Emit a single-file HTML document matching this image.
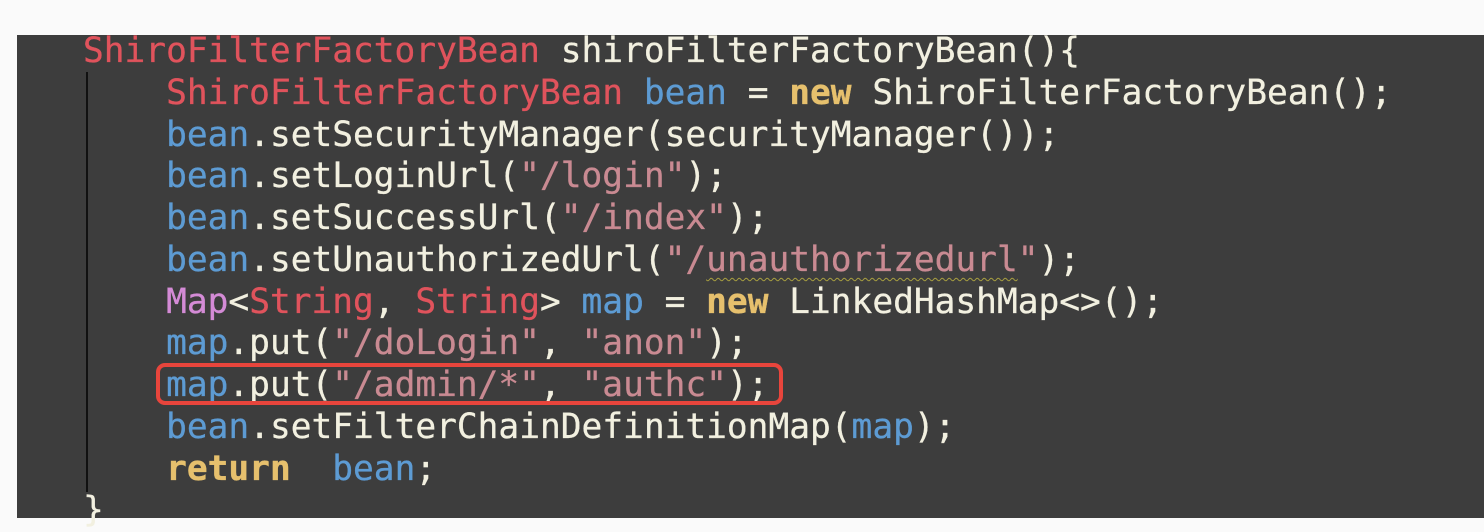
<!DOCTYPE html>
<html><head><meta charset="utf-8">
<style>
html,body{margin:0;padding:0;width:1484px;height:518px;overflow:hidden;background:#fafafa;}
.panel{position:absolute;left:17px;top:35px;width:1467px;height:483px;background:#3d3d3d;}
.l{position:absolute;left:83px;white-space:pre;font-family:"DejaVu Sans Mono","Liberation Mono",monospace;font-size:34.5px;line-height:41.75px;color:#f2f0e0;-webkit-text-stroke:0.3px currentColor;}
.r{color:#e0535c}.b{color:#5d9bd3}.y{color:#e6c06d;font-weight:bold}.p{color:#d48bd6}.s{color:#c98a92}
.w{text-decoration:underline wavy #a8a040;text-decoration-thickness:1px;text-underline-offset:6px}
.guide{position:absolute;left:86px;top:72px;width:2px;height:420px;background:#111;}
.box{position:absolute;left:156px;top:363px;width:619px;height:34px;border:4.5px solid #e8453c;border-radius:9px;}
</style></head><body>
<div class="panel"></div>
<div class="guide"></div>
<div class="l" style="top:31px"><span class="r">ShiroFilterFactoryBean</span> shiroFilterFactoryBean(){</div>
<div class="l" style="top:72.75px">    <span class="r">ShiroFilterFactoryBean</span> <span class="b">bean</span> = <span class="y">new</span> ShiroFilterFactoryBean();</div>
<div class="l" style="top:114.5px">    <span class="b">bean</span>.setSecurityManager(securityManager());</div>
<div class="l" style="top:156.25px">    <span class="b">bean</span>.setLoginUrl(<span class="s">"/login"</span>);</div>
<div class="l" style="top:198px">    <span class="b">bean</span>.setSuccessUrl(<span class="s">"/index"</span>);</div>
<div class="l" style="top:239.75px">    <span class="b">bean</span>.setUnauthorizedUrl(<span class="s">"/<span class="w">unauthorizedurl</span>"</span>);</div>
<div class="l" style="top:281.5px">    <span class="p">Map</span>&lt;<span class="r">String</span>, <span class="r">String</span>&gt; <span class="b">map</span> = <span class="y">new</span> LinkedHashMap&lt;&gt;();</div>
<div class="l" style="top:323.25px">    <span class="b">map</span>.put(<span class="s">"/doLogin"</span>, <span class="s">"anon"</span>);</div>
<div class="l" style="top:365px">    <span class="b">map</span>.put(<span class="s">"/admin/*"</span>, <span class="s">"authc"</span>);</div>
<div class="l" style="top:406.75px">    <span class="b">bean</span>.setFilterChainDefinitionMap(<span class="b">map</span>);</div>
<div class="l" style="top:448.5px">    <span class="y">return</span>  <span class="b">bean</span>;</div>
<div class="l" style="top:490.25px">}</div>
<div class="box"></div>
</body></html>
